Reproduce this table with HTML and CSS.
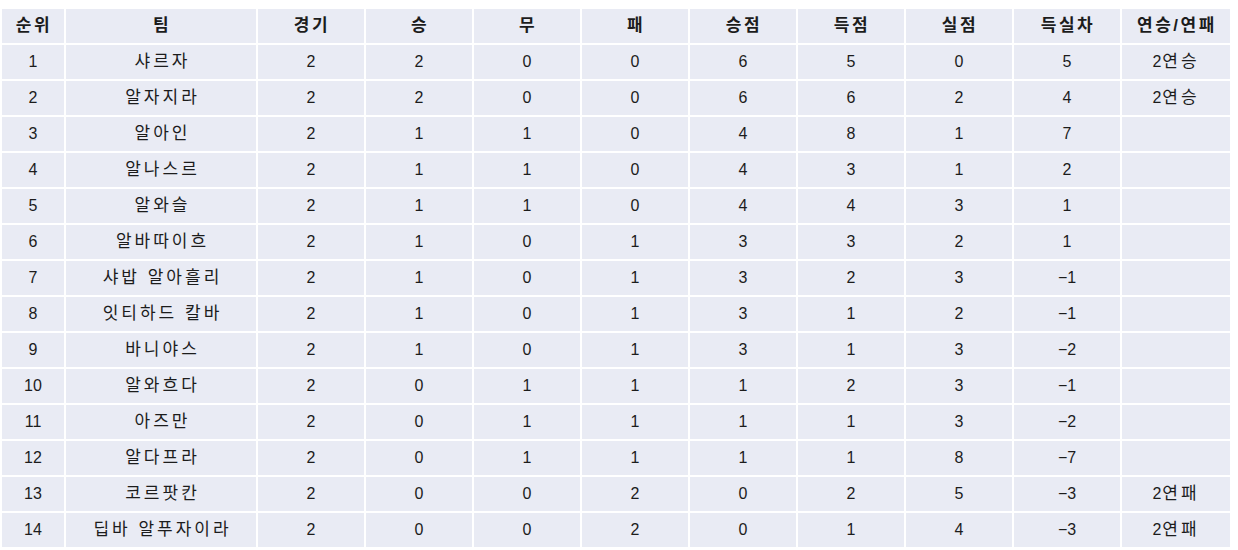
FILE: index.html
```html
<!DOCTYPE html>
<html lang="ko">
<head>
<meta charset="utf-8">
<title>순위표</title>
<link rel="stylesheet" href="styles.css">
</head>
<body>
<table class="standings">
  <colgroup>
    <col class="c-rank">
    <col class="c-team">
    <col class="c-num"><col class="c-num"><col class="c-num"><col class="c-num">
    <col class="c-num"><col class="c-num"><col class="c-num"><col class="c-num">
    <col class="c-streak">
  </colgroup>
  <thead>
    <tr><th>순위</th><th>팀</th><th>경기</th><th>승</th><th>무</th><th>패</th><th>승점</th><th>득점</th><th>실점</th><th>득실차</th><th>연승/연패</th></tr>
  </thead>
  <tbody>
    <tr><td>1</td><td class="ko">샤르자</td><td>2</td><td>2</td><td>0</td><td>0</td><td>6</td><td>5</td><td>0</td><td>5</td><td>2<span class="ko">연승</span></td></tr>
    <tr><td>2</td><td class="ko">알자지라</td><td>2</td><td>2</td><td>0</td><td>0</td><td>6</td><td>6</td><td>2</td><td>4</td><td>2<span class="ko">연승</span></td></tr>
    <tr><td>3</td><td class="ko">알아인</td><td>2</td><td>1</td><td>1</td><td>0</td><td>4</td><td>8</td><td>1</td><td>7</td><td></td></tr>
    <tr><td>4</td><td class="ko">알나스르</td><td>2</td><td>1</td><td>1</td><td>0</td><td>4</td><td>3</td><td>1</td><td>2</td><td></td></tr>
    <tr><td>5</td><td class="ko">알와슬</td><td>2</td><td>1</td><td>1</td><td>0</td><td>4</td><td>4</td><td>3</td><td>1</td><td></td></tr>
    <tr><td>6</td><td class="ko">알바따이흐</td><td>2</td><td>1</td><td>0</td><td>1</td><td>3</td><td>3</td><td>2</td><td>1</td><td></td></tr>
    <tr><td>7</td><td class="ko">샤밥 알아흘리</td><td>2</td><td>1</td><td>0</td><td>1</td><td>3</td><td>2</td><td>3</td><td>−1</td><td></td></tr>
    <tr><td>8</td><td class="ko">잇티하드 칼바</td><td>2</td><td>1</td><td>0</td><td>1</td><td>3</td><td>1</td><td>2</td><td>−1</td><td></td></tr>
    <tr><td>9</td><td class="ko">바니야스</td><td>2</td><td>1</td><td>0</td><td>1</td><td>3</td><td>1</td><td>3</td><td>−2</td><td></td></tr>
    <tr><td>10</td><td class="ko">알와흐다</td><td>2</td><td>0</td><td>1</td><td>1</td><td>1</td><td>2</td><td>3</td><td>−1</td><td></td></tr>
    <tr><td>11</td><td class="ko">아즈만</td><td>2</td><td>0</td><td>1</td><td>1</td><td>1</td><td>1</td><td>3</td><td>−2</td><td></td></tr>
    <tr><td>12</td><td class="ko">알다프라</td><td>2</td><td>0</td><td>1</td><td>1</td><td>1</td><td>1</td><td>8</td><td>−7</td><td></td></tr>
    <tr><td>13</td><td class="ko">코르팟칸</td><td>2</td><td>0</td><td>0</td><td>2</td><td>0</td><td>2</td><td>5</td><td>−3</td><td>2<span class="ko">연패</span></td></tr>
    <tr><td>14</td><td class="ko">딥바 알푸자이라</td><td>2</td><td>0</td><td>0</td><td>2</td><td>0</td><td>1</td><td>4</td><td>−3</td><td>2<span class="ko">연패</span></td></tr>
  </tbody>
</table>
</body>
</html>
```

FILE: styles.css
```css
html, body {
  margin: 0;
  padding: 0;
  background: #ffffff;
}

body {
  padding-top: 7px;
  font-family: "Liberation Sans", "Noto Sans CJK KR", sans-serif;
  font-size: 16px;
  color: #1c1c1c;
}

.standings {
  table-layout: fixed;
  width: 1232px;
  border-collapse: separate;
  border-spacing: 2px;
}

.c-rank { width: 62px; }
.c-team { width: 190px; }
.c-num { width: 106px; }
.c-streak { width: 108px; }

.standings th,
.standings td {
  background: #e9ebf4;
  height: 34px;
  padding: 0;
  text-align: center;
  vertical-align: middle;
  white-space: nowrap;
  line-height: 18px;
}

.standings th {
  font-size: 17px;
  font-weight: bold;
  letter-spacing: 2.5px;
  padding-left: 2px;
}

.standings td {
  font-weight: normal;
}

.standings .ko {
  font-size: 17px;
  letter-spacing: 3px;
  padding-left: 3px;
}

.standings td > .ko {
  padding-left: 1px;
}
```
